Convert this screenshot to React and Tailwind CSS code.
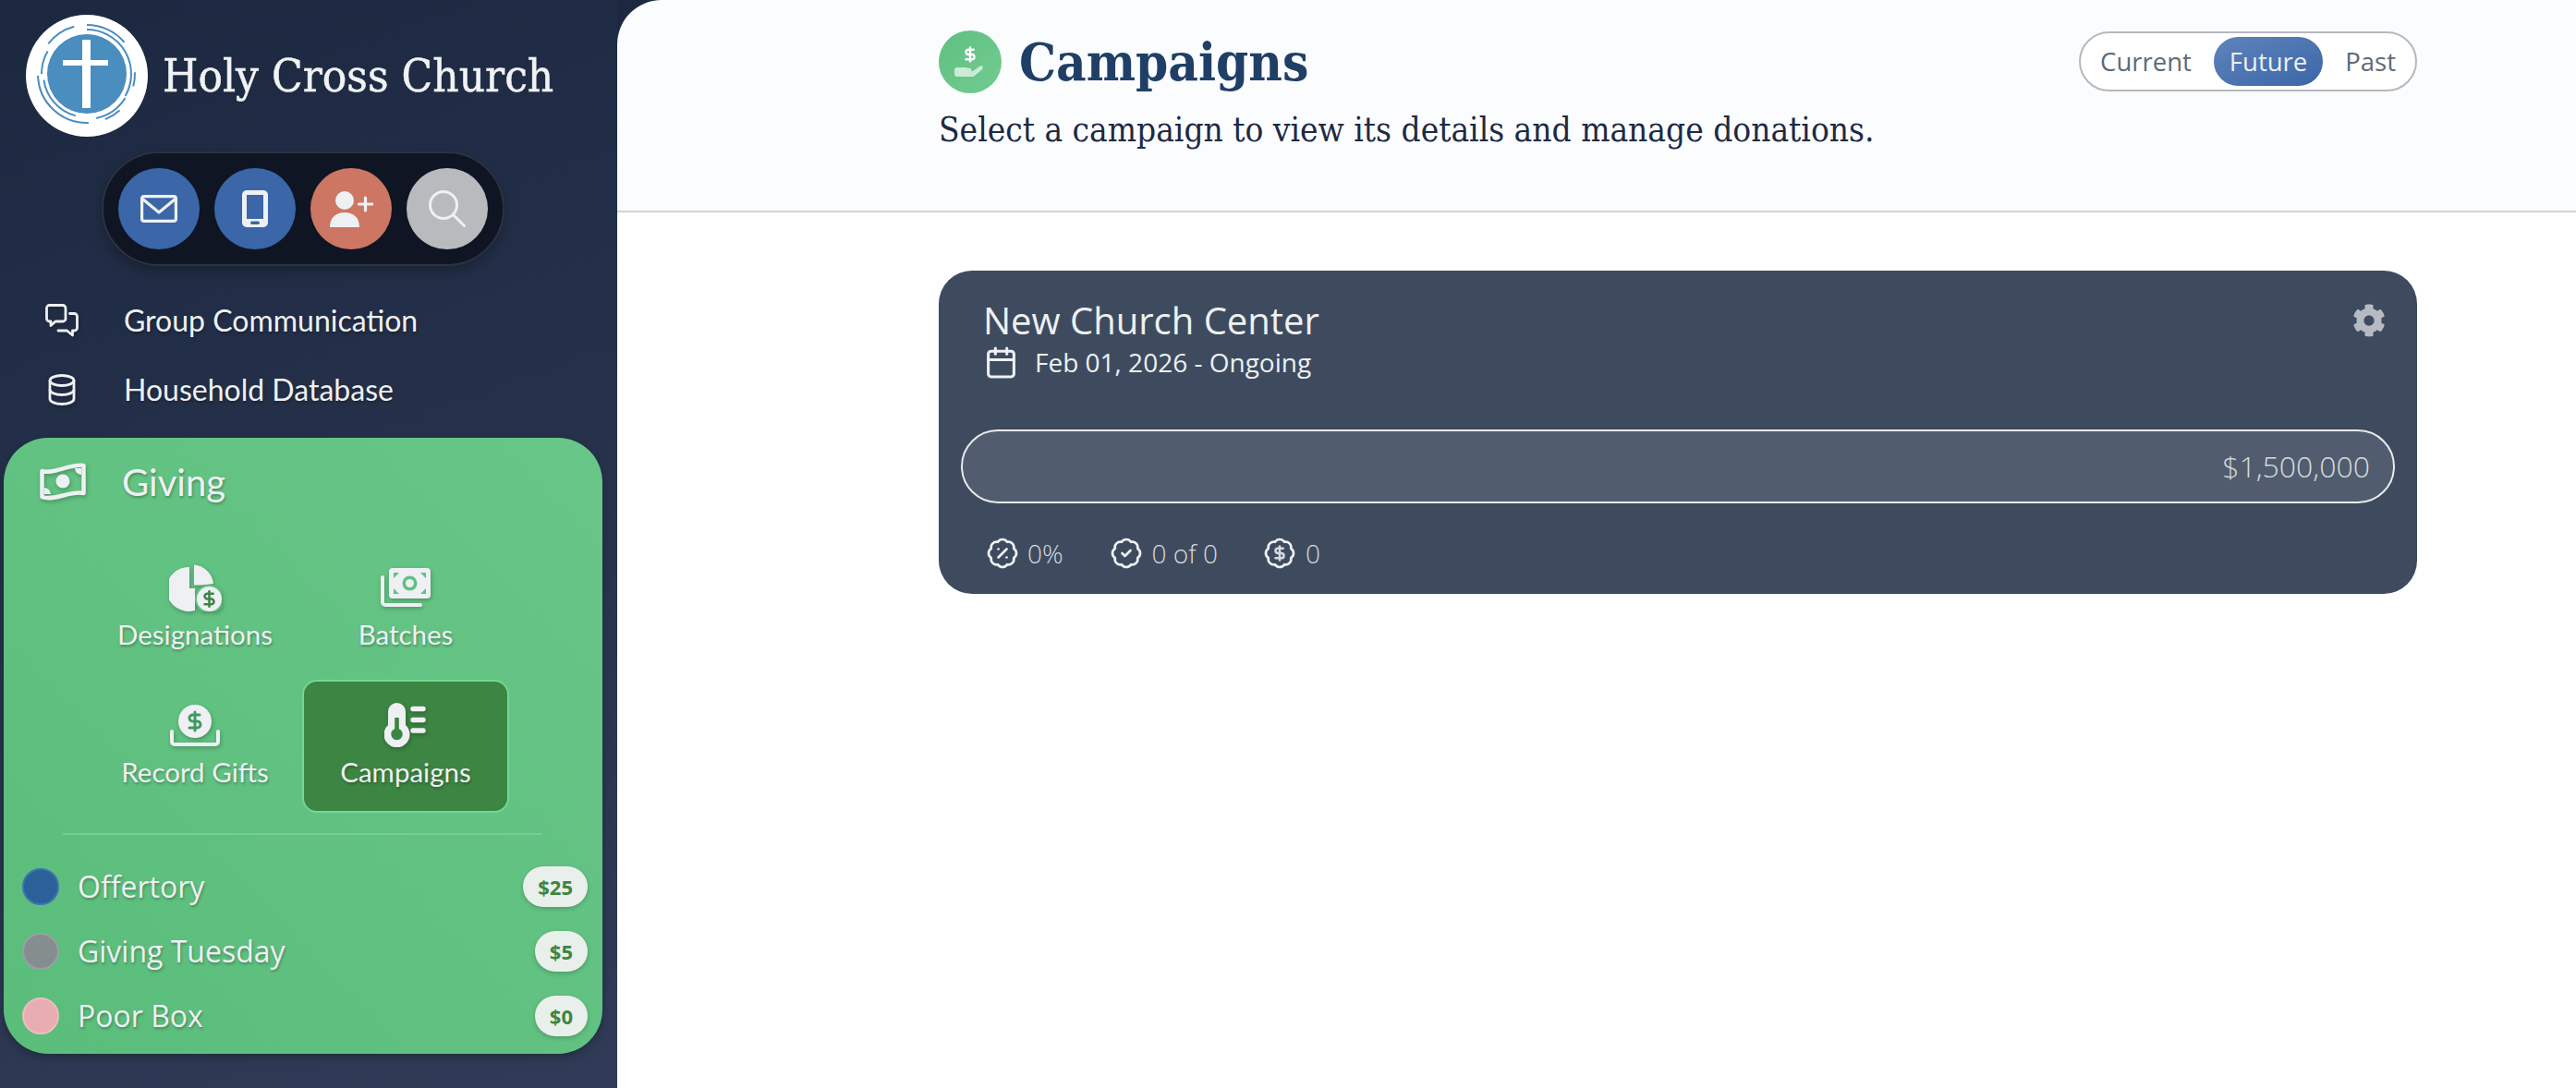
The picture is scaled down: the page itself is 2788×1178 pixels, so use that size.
import { Calendar, BadgePercent, BadgeCheck, DollarSign } from 'lucide-react';
import { FaCog } from 'react-icons/fa';

const serif = "font-['DejaVu_Serif_Condensed','DejaVu_Serif',serif]";
const open = "font-['Open_Sans',sans-serif]";
const ral = "font-['Lato',sans-serif]";
const softShadow = '[text-shadow:1px_2px_3px_rgba(0,0,0,0.28)]';
const iconShadow = 'drop-shadow-[1px_2px_2px_rgba(0,0,0,0.25)]';

function arc(r, a0, a1) {
  const p = (a) => [66 + r * Math.sin((a * Math.PI) / 180), 64 - r * Math.cos((a * Math.PI) / 180)];
  const [x0, y0] = p(a0);
  const [x1, y1] = p(a1);
  return `M${x0} ${y0}A${r} ${r} 0 ${a1 - a0 > 180 ? 1 : 0} 1 ${x1} ${y1}`;
}

function Logo() {
  const arcs = [
    [53, 0, 50], [48, 0, 120], [52, 88, 105], [49, 122, 168], [53, 138, 158],
    [53, 178, 268], [47, 195, 262], [49, 270, 300], [53, 308, 345],
  ];
  return (
    <svg width="132" height="132" viewBox="0 0 132 132" className="shrink-0">
      <circle cx="66" cy="66" r="66" fill="#fff" />
      <circle cx="66" cy="64" r="43" fill="#4a8dbf" />
      {arcs.map(([r, a, b], i) => (
        <path key={i} d={arc(r, a, b)} fill="none" stroke="#4a8dbf" strokeWidth="2" />
      ))}
      <rect x="61" y="27" width="9" height="74" fill="#fff" />
      <rect x="40" y="49" width="49" height="6" fill="#fff" />
    </svg>
  );
}

function MailIcon() {
  return (
    <svg width="40" height="30" viewBox="0 0 40 30" fill="none" stroke="#eef0f3" strokeWidth="3.2" strokeLinejoin="round">
      <rect x="1.6" y="1.6" width="36.8" height="26.8" rx="2.5" />
      <path d="M3 5L20 19L37 5" strokeLinecap="round" />
    </svg>
  );
}

function PhoneIcon() {
  return (
    <svg width="28" height="40" viewBox="0 0 28 40">
      <rect width="28" height="40" rx="5" fill="#eef0f3" />
      <rect x="5" y="5" width="18" height="26" fill="#3b66a8" />
      <rect x="9" y="33.5" width="10" height="3.5" rx="1.7" fill="#3b66a8" />
    </svg>
  );
}

function UserPlusIcon() {
  return (
    <svg width="47" height="39" viewBox="0 0 47 39" fill="#eef0f3">
      <ellipse cx="16" cy="10" rx="10" ry="10" />
      <path d="M0 39C0 28 7 23 16 23S32 28 32 39Z" />
      <path d="M38.5 7V21M31.5 14H46" stroke="#eef0f3" strokeWidth="3.2" strokeLinecap="round" />
    </svg>
  );
}

function SearchIcon() {
  return (
    <svg width="40" height="40" viewBox="0 0 40 40" fill="none" stroke="#eef0f3" strokeWidth="3" strokeLinecap="round">
      <circle cx="16" cy="16" r="14.5" />
      <path d="M26.5 26.5L38.5 38.5" />
    </svg>
  );
}

function BubblesIcon() {
  return (
    <svg width="36" height="36" viewBox="0 0 36 36" fill="none" stroke="#eef0f3" strokeWidth="2.8" strokeLinejoin="round" strokeLinecap="round">
      <path d="M4.5 1.5H19a3 3 0 0 1 3 3V16a3 3 0 0 1-3 3H11L6 23.5V19H4.5a3 3 0 0 1-3-3V4.5a3 3 0 0 1 3-3Z" />
      <path d="M26.5 10.5H31.5a3 3 0 0 1 3 3V26a3 3 0 0 1-3 3H29.5V34L23.5 29H14" />
    </svg>
  );
}

function DatabaseIcon() {
  return (
    <svg width="30" height="34" viewBox="0 0 30 34" fill="none" stroke="#eef0f3" strokeWidth="2.8">
      <ellipse cx="15" cy="7" rx="13" ry="5.5" />
      <path d="M2 7V27c0 3 6 5.5 13 5.5s13-2.5 13-5.5V7" />
      <path d="M2 17c0 3 6 5.5 13 5.5s13-2.5 13-5.5" />
    </svg>
  );
}

function MoneyWaveIcon() {
  return (
    <svg width="50" height="42" viewBox="0 0 50 42" className={iconShadow}>
      <path d="M2.5 9C14 13 32 1 47.5 3V33C33 30 15 42 2.5 37Z" fill="none" stroke="#eef0f3" strokeWidth="4.5" strokeLinejoin="round" />
      <circle cx="25" cy="20" r="7.5" fill="#eef0f3" />
      <path d="M5 27a8 8 0 0 1 7 7H5ZM45 13a8 8 0 0 1-7-7h7Z" fill="#eef0f3" />
    </svg>
  );
}

function PieDollarIcon() {
  return (
    <svg width="57" height="51" viewBox="0 0 57 51" className={iconShadow}>
      <path d="M22 3A24 24 0 1 0 28 50V26H22Z" fill="#eef0f3" />
      <path d="M27 0.5A23 23 0 0 1 48 21L36 22.5H27Z" fill="#eef0f3" />
      <circle cx="43.5" cy="37.5" r="15.5" fill="#60c182" />
      <circle cx="43.5" cy="37.5" r="13.5" fill="#eef0f3" />
      <DollarSign x="33.5" y="27.5" width="20" height="20" stroke="#3d8542" strokeWidth="3" />
    </svg>
  );
}

function BillsIcon() {
  return (
    <svg width="54" height="42" viewBox="0 0 54 42" className={iconShadow}>
      <path d="M2 10V37a3 3 0 0 0 3 3H43" fill="none" stroke="#eef0f3" strokeWidth="4" strokeLinecap="round" />
      <rect x="9" y="0" width="45" height="33" rx="4" fill="#eef0f3" />
      <circle cx="31.5" cy="16.5" r="8" fill="#60c182" />
      <circle cx="31.5" cy="16.5" r="4.5" fill="#eef0f3" />
      <path d="M14 5H20L14 11ZM49 5H43L49 11ZM14 28H20L14 22ZM49 28H43L49 22Z" fill="#60c182" />
    </svg>
  );
}

function TrayDollarIcon() {
  return (
    <svg width="54" height="45" viewBox="0 0 54 45" className={iconShadow}>
      <circle cx="27" cy="18" r="18" fill="#eef0f3" />
      <DollarSign x="15" y="6" width="24" height="24" stroke="#3f9a5f" strokeWidth="3" />
      <path d="M2 29V40a3 3 0 0 0 3 3H49a3 3 0 0 0 3-3V29" fill="none" stroke="#eef0f3" strokeWidth="4" strokeLinecap="round" />
    </svg>
  );
}

function ThermometerIcon() {
  return (
    <svg width="46" height="48" viewBox="0 0 46 48" className={iconShadow}>
      <path d="M4 9.5a9.5 9.5 0 0 1 19 0V24a14 14 0 1 1-19 0Z" fill="#eef0f3" />
      <rect x="11.2" y="16" width="4.6" height="18" fill="#3d8542" />
      <circle cx="13.5" cy="34" r="6.2" fill="#3d8542" />
      <path d="M31 6.5H42M31 18.5H42M31 30H42" stroke="#eef0f3" strokeWidth="5.5" strokeLinecap="round" />
    </svg>
  );
}

function HandDollarIcon() {
  return (
    <svg width="36" height="34" viewBox="0 0 36 34">
      <DollarSign x="9" y="0" width="18" height="18" stroke="#fff" strokeWidth="3.2" />
      <path d="M1 26a3 3 0 0 1 3-3h9c2 0 3 1 5 1s2 3 0 3h-4h7l7-5c3-2 5 1 3 3l-7 6c-1 1-2 2-4 2H4a3 3 0 0 1-3-3Z" fill="#fff" fillOpacity="0.65" />
    </svg>
  );
}

// scalloped badge with a smaller dollar than lucide's own
function BadgeDollarIcon() {
  return (
    <svg width="36" height="36" viewBox="0 0 24 24" fill="none" stroke="#eef0f3" strokeWidth="1.8" strokeLinejoin="round" className="ml-[49px]">
      <path d="M3.85 8.62a4 4 0 0 1 4.78-4.77 4 4 0 0 1 6.74 0 4 4 0 0 1 4.78 4.78 4 4 0 0 1 0 6.74 4 4 0 0 1-4.77 4.78 4 4 0 0 1-6.75 0 4 4 0 0 1-4.78-4.77 4 4 0 0 1 0-6.76Z" />
      <DollarSign x="6" y="6" width="12" height="12" strokeWidth="3.4" />
    </svg>
  );
}

const navLinks = [
  { label: 'Group Communication', icon: <BubblesIcon /> },
  { label: 'Household Database', icon: <DatabaseIcon /> },
];

const givingLinks = [
  { label: 'Designations', icon: <PieDollarIcon /> },
  { label: 'Batches', icon: <BillsIcon /> },
  { label: 'Record Gifts', icon: <TrayDollarIcon /> },
  { label: 'Campaigns', icon: <ThermometerIcon />, active: true },
];

const funds = [
  { name: 'Offertory', amount: '$25', dot: 'bg-[#2b6098] border-[#3d75b0]' },
  { name: 'Giving Tuesday', amount: '$5', dot: 'bg-[#868d8f] border-[#9aa0a3]' },
  { name: 'Poor Box', amount: '$0', dot: 'bg-[#e8adb3] border-[#eebcc1]' },
];

function Sidebar() {
  return (
    <aside className="w-[668px] h-full shrink-0 flex flex-col bg-[linear-gradient(160deg,#1c2840,#303c57)] text-[#eef0f3]">
      <div className="flex items-center pl-[28px] pt-[16px]">
        <Logo />
        <span className={`${serif} ml-[16px] text-[49px] leading-none text-[#f1f2f4] font-normal [-webkit-text-stroke:0.5px_#f1f2f4]`}>Holy Cross Church</span>
      </div>

      <div className="mt-[16px] ml-[110px] w-fit flex gap-[16px] p-[16px] rounded-full bg-[#0f1522] border-2 border-[#2b3240] shadow-[0_6px_14px_rgba(0,0,0,0.25)]">
        <div className="w-[88px] h-[88px] rounded-full bg-[#3b66a8] flex items-center justify-center">
          <MailIcon />
        </div>
        <div className="w-[88px] h-[88px] rounded-full bg-[#3b66a8] flex items-center justify-center">
          <PhoneIcon />
        </div>
        <div className="w-[88px] h-[88px] rounded-full bg-[#cd7663] flex items-center justify-center">
          <UserPlusIcon />
        </div>
        <div className="w-[88px] h-[88px] rounded-full bg-[#b9babd] flex items-center justify-center">
          <SearchIcon />
        </div>
      </div>

      <nav className="mt-[21px]">
        {navLinks.map((l) => (
          <div key={l.label} className="h-[75px] flex items-center">
            <span className={`w-[134px] flex justify-center ${iconShadow}`}>{l.icon}</span>
            <span className={`${ral} text-[32px] ${softShadow}`}>{l.label}</span>
          </div>
        ))}
      </nav>

      <section className="mt-[15px] ml-[4px] w-[648px] h-[667px] rounded-[48px] bg-gradient-to-tr from-[#5abd7a] to-[#68c688] shadow-[0_4px_10px_rgba(0,0,0,0.25)]">
        <div className="h-[96px] flex items-center">
          <span className="w-[128px] flex justify-center">
            <MoneyWaveIcon />
          </span>
          <span className={`${ral} text-[40px] ${softShadow}`}>Giving</span>
        </div>

        <div className="mt-[17px] ml-[95px] grid grid-cols-[224px_224px] auto-rows-[144px] gap-x-[4px] gap-y-[5px]">
          {givingLinks.map((g) => (
            <div
              key={g.label}
              className={`flex flex-col items-center rounded-[16px] border-2 ${g.active ? 'bg-[#3d8542] border-[#72d898]' : 'border-transparent'}`}
            >
              <div className="h-[48px] mt-[23px] flex items-center justify-center">{g.icon}</div>
              <span className={`${ral} mt-[9px] text-[29.5px] leading-[36px] ${softShadow}`}>{g.label}</span>
            </div>
          ))}
        </div>

        <div className="mt-[22px] ml-[64px] w-[519px] h-[2px] bg-[#74cf93]" />

        <div className="mt-[21px] pl-[20px] pr-[16px]">
          {funds.map((f) => (
            <div key={f.name} className="h-[70px] flex items-center">
              <span className={`w-[40px] h-[40px] rounded-full border-2 ${f.dot}`} />
              <span className={`${open} ml-[20px] text-[32px] ${softShadow}`}>{f.name}</span>
              <span className={`${open} ml-auto h-[44px] px-[16px] rounded-full bg-[#e9efeb] text-[#3d8542] text-[22px] font-bold flex items-center shadow-[0_2px_5px_rgba(0,0,0,0.2)]`}>
                {f.amount}
              </span>
            </div>
          ))}
        </div>
      </section>
    </aside>
  );
}

function Header() {
  const tabs = ['Current', 'Future', 'Past'];
  return (
    <header className="h-[230px] shrink-0 bg-[#fbfcfe] border-b-2 border-[#d2d4d7] rounded-tl-[48px] pl-[348px] pr-[172px] pt-[33px]">
      <div className="flex justify-between items-start">
        <div className="flex items-center gap-[19px]">
          <div className="w-[68px] h-[68px] rounded-full bg-gradient-to-br from-[#5fc07f] to-[#72cb91] flex items-center justify-center">
            <HandDollarIcon />
          </div>
          <h1 className={`${serif} text-[56px] leading-[66px] font-bold text-[#1f3f66]`}>Campaigns</h1>
        </div>
        <div className={`${open} flex gap-[7px] p-[4px] rounded-full bg-white border-2 border-[#b4b9bd] text-[27.5px] mt-[1px]`}>
          {tabs.map((t) => (
            <span
              key={t}
              className={`h-[53px] px-[17px] rounded-full flex items-center ${t === 'Future' ? 'bg-gradient-to-br from-[#5f84bb] to-[#3b66a8] text-[#eef0f3]' : 'text-[#5b6b77]'}`}
            >
              {t}
            </span>
          ))}
        </div>
      </div>
      <p className={`${serif} mt-[16px] text-[36.7px] leading-[48px] text-[#1e2a44]`}>Select a campaign to view its details and manage donations.</p>
    </header>
  );
}

function CampaignCard() {
  return (
    <div className={`${open} w-[1600px] h-[350px] rounded-[36px] bg-[#3e4b5e] text-[#eef0f3] pt-[32px] px-[24px]`}>
      <div className="flex justify-between pl-[24px] pr-[10px]">
        <div>
          <h2 className="text-[40px] leading-[44px] font-normal">New Church Center</h2>
          <div className="flex items-center mt-[4px] h-[38px]">
            <Calendar size={37} strokeWidth={2} className="ml-[1px]" />
            <span className="ml-[18px] text-[28px]">Feb 01, 2026 - Ongoing</span>
          </div>
        </div>
        <FaCog size={36} color="#b5bac3" className="mt-[4px]" />
      </div>

      <div className="mt-[54px] h-[80px] rounded-full bg-[#515d6e] border-2 border-[#e8eaed] flex items-center justify-end pr-[25px]">
        <span className="text-[32px] font-light text-[#d6d9de]">$1,500,000</span>
      </div>

      <div className="mt-[36px] pl-[26px] flex items-center text-[28px] font-light text-[#d6d9de] h-[36px]">
        <BadgePercent size={36} strokeWidth={1.8} color="#eef0f3" className="ml-[1px]" />
        <span className="ml-[9px]">0%</span>
        <BadgeCheck size={36} strokeWidth={1.8} color="#eef0f3" className="ml-[50px]" />
        <span className="ml-[10px]">0 of 0</span>
        <BadgeDollarIcon />
        <span className="ml-[10px]">0</span>
      </div>
    </div>
  );
}

export default function App() {
  return (
    <div className="w-full h-screen overflow-hidden flex bg-[#1c2840]">
      <Sidebar />
      <main className="flex-1 h-full flex flex-col bg-[#1c2840]">
        <Header />
        <div className="flex-1 bg-white pl-[348px] pt-[63px]">
          <CampaignCard />
        </div>
      </main>
    </div>
  );
}
